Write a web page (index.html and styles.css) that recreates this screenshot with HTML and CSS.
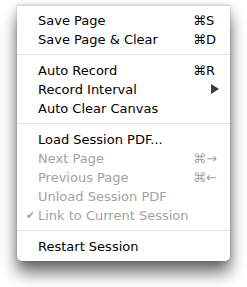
FILE: index.html
```html
<!DOCTYPE html>
<html lang="en">
<head>
  <meta charset="UTF-8">
  <title>Session Menu</title>
  <link rel="stylesheet" href="styles.css">
</head>
<body>
  <div class="menu">
    <div class="item"><span class="check"></span><span class="label">Save Page</span><span class="key">⌘S</span></div>
    <div class="item"><span class="check"></span><span class="label">Save Page &amp; Clear</span><span class="key">⌘D</span></div>
    <div class="sep"></div>
    <div class="item"><span class="check"></span><span class="label">Auto Record</span><span class="key">⌘R</span></div>
    <div class="item"><span class="check"></span><span class="label">Record Interval</span><span class="key"><span class="arrow"></span></span></div>
    <div class="item"><span class="check"></span><span class="label">Auto Clear Canvas</span><span class="key"></span></div>
    <div class="sep"></div>
    <div class="item"><span class="check"></span><span class="label">Load Session PDF...</span><span class="key"></span></div>
    <div class="item disabled"><span class="check"></span><span class="label">Next Page</span><span class="key">⌘→</span></div>
    <div class="item disabled"><span class="check"></span><span class="label">Previous Page</span><span class="key">⌘←</span></div>
    <div class="item disabled"><span class="check"></span><span class="label">Unload Session PDF</span><span class="key"></span></div>
    <div class="item disabled"><span class="check">✔</span><span class="label">Link to Current Session</span><span class="key"></span></div>
    <div class="sep"></div>
    <div class="item"><span class="check"></span><span class="label">Restart Session</span><span class="key"></span></div>
  </div>
</body>
</html>
```

FILE: styles.css
```css
html {
  background: #ffffff;
}
body {
  margin: 0;
  padding: 5px 0 0 17px;
  min-height: 287px;
  box-sizing: border-box;
  background: #ffffff;
  font-family: "DejaVu Sans", sans-serif;
  font-size: 13px;
}
.menu {
  width: 213px;
  padding: 5px 0;
  background: #ffffff;
  border-top: 1px solid #d8d8d8;
  border-radius: 0 0 5px 5px;
  box-shadow: 0 12px 16px rgba(0, 0, 0, 0.55), 0 2px 10px rgba(0, 0, 0, 0.18), 0 0 0 1px rgba(0, 0, 0, 0.06);
  color: #000000;
}
.item {
  display: flex;
  align-items: center;
  height: 19px;
}
.check {
  width: 21px;
  text-align: right;
  padding-right: 3px;
  box-sizing: border-box;
  font-size: 11px;
}
.label {
  flex: 1;
}
.key {
  width: 37px;
}
.arrow {
  display: inline-block;
  margin-left: 18px;
  width: 0;
  height: 0;
  border-left: 8px solid #3c3c3c;
  border-top: 5px solid transparent;
  border-bottom: 5px solid transparent;
}
.disabled {
  color: #a2a2a2;
}
.sep {
  height: 1px;
  background: #e3e3e3;
  margin: 5px 0 6px;
}
```
